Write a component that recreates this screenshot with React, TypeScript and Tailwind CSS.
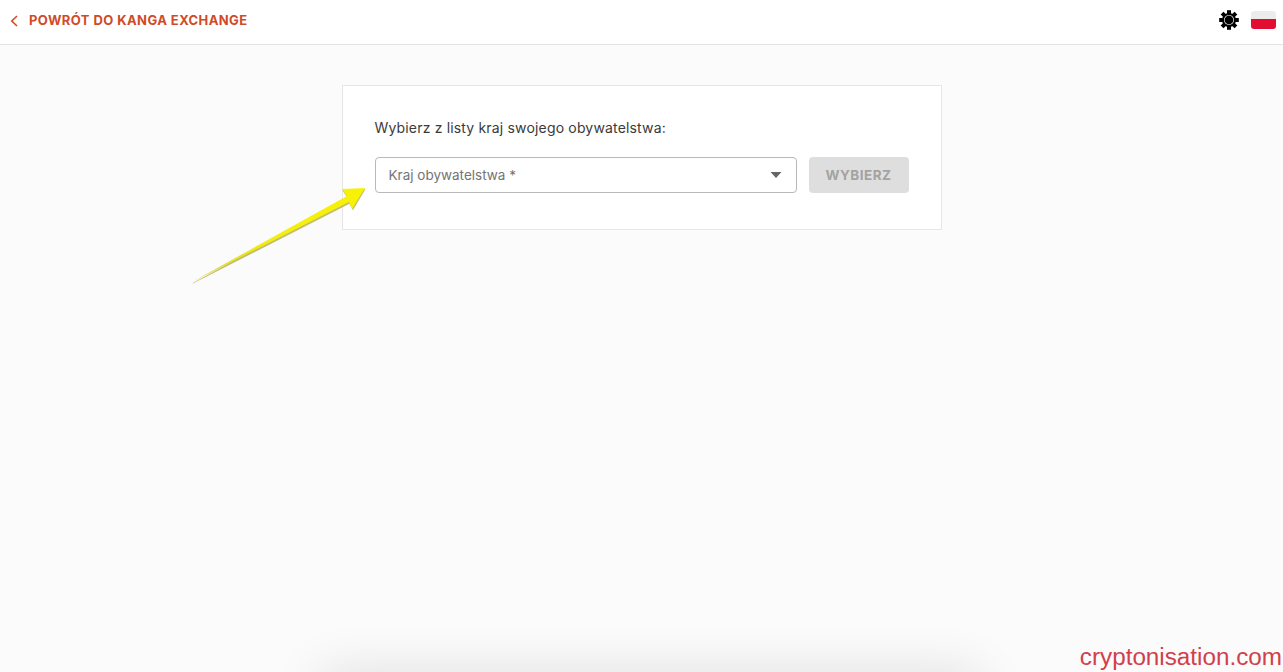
import React from "react";

function Sun() {
  const teeth = [0, 45, 90, 135, 180, 225, 270, 315];
  return (
    <svg width="20" height="20" viewBox="0 0 20 20" className="block">
      {teeth.map((a) => (
        <rect key={a} x="8" y="0.2" width="4" height="4" fill="#000" transform={`rotate(${a} 10 10)`} />
      ))}
      <circle cx="10" cy="10" r="7" fill="#000" />
      <circle cx="10" cy="10" r="5" fill="#fff" />
      <circle cx="10" cy="10" r="4.4" fill="#000" />
    </svg>
  );
}

function Arrow() {
  return (
    <svg width="190" height="112" viewBox="0 0 190 112" className="block">
      <defs>
        <linearGradient id="g" x1="0" y1="1" x2="1" y2="0">
          <stop offset="0" stopColor="#d9d32a" />
          <stop offset="0.45" stopColor="#f3ee10" />
          <stop offset="1" stopColor="#f7f205" />
        </linearGradient>
      </defs>
      <path d="M1 110.5 L156 25 L151 17.5 L174 16.5 L161.5 37.5 L158 31 L2 110.5 Z" fill="#a8a230" transform="translate(0.4 0.8)" opacity="0.7" />
      <path d="M1 110 L156 24 L151 17 L174 16 L161 37 L158 30 L1 110 Z" fill="url(#g)" />
    </svg>
  );
}

export default function App() {
  return (
    <div className="relative h-[672px] overflow-hidden bg-[#fbfbfb] font-['Inter','Liberation_Sans',sans-serif]">
      <header className="flex h-[45px] items-center justify-between border-b border-[#e3e3e3] bg-white pb-[4px] pl-[9px] pr-[7px]">
        <div className="flex items-center gap-[9px] text-[#cf4a28]">
          <svg width="11" height="12" viewBox="0 0 11 12" fill="none" stroke="currentColor" strokeWidth="1.6" className="mt-[1px]">
            <path d="M8 1 L2.8 6 L8 11" />
          </svg>
          <span className="text-[13px] font-bold leading-none tracking-[0.42px]">POWRÓT DO KANGA EXCHANGE</span>
        </div>
        <div className="flex items-center gap-[12px]">
          <Sun />
          <div className="flex h-[18px] w-[25px] flex-col overflow-hidden rounded-[3px]">
            <div className="h-[8px] bg-[#ececec]" />
            <div className="flex-1 bg-[#e30d33]" />
          </div>
        </div>
      </header>

      <main className="flex justify-center pt-[40px]">
        <section className="h-[145px] w-[600px] border border-[#e6e6e6] bg-white px-[32px] pt-[32px]">
          <p className="text-[14px] leading-[20px] tracking-[0.17px] text-[#3a3a3a]">Wybierz z listy kraj swojego obywatelstwa:</p>
          <div className="mt-[19px] flex gap-[12px]">
            <div className="flex h-[36px] w-[422px] items-center justify-between rounded-[4px] border border-[#b9b9b9] bg-white pl-[13px] pr-[14px]">
              <span className="text-[13.5px] text-[#747474]">Kraj obywatelstwa *</span>
              <svg width="12" height="6" viewBox="0 0 12 6"><path d="M0.5 0 H11.5 L6 6 Z" fill="#666666" /></svg>
            </div>
            <button className="h-[36px] w-[100px] rounded-[4px] bg-[#dedede] text-[13.5px] font-bold tracking-[0.5px] text-[#a3a3a3]">WYBIERZ</button>
          </div>
        </section>
      </main>

      <div className="absolute left-[191px] top-[172px]">
        <Arrow />
      </div>
      <div className="absolute bottom-[-40px] left-[320px] h-[40px] w-[660px] shadow-[0_0_50px_0_rgba(0,0,0,0.12)]" />
      <div className="absolute bottom-[1px] right-[1px] font-['Liberation_Sans',sans-serif] text-[24.25px] leading-[28px] text-[#d2404a]">cryptonisation.com</div>
    </div>
  );
}
